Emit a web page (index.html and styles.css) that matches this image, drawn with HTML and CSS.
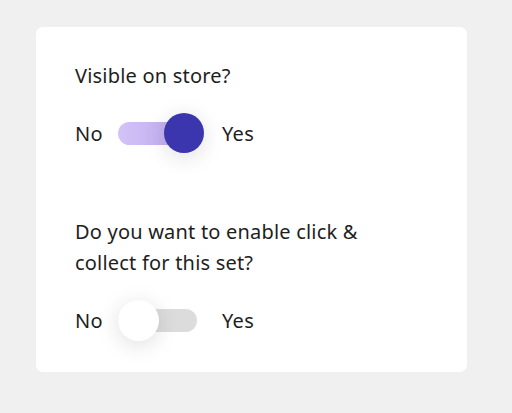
FILE: index.html
```html
<!DOCTYPE html>
<html lang="en">
<head>
    <meta charset="UTF-8">
    <meta name="viewport" content="width=device-width, initial-scale=1.0">
    <title>Store settings</title>
    <link rel="stylesheet" href="styles.css">
</head>
<body>
    <div class="card">
        <p class="question">Visible on store?</p>
        <div class="switch-row first">
            <span class="label">No</span>
            <div class="switch on">
                <div class="track"></div>
                <div class="knob"></div>
            </div>
            <span class="label">Yes</span>
        </div>

        <p class="question second">Do you want to enable click &amp;<br>collect for this set?</p>
        <div class="switch-row">
            <span class="label">No</span>
            <div class="switch">
                <div class="track"></div>
                <div class="knob"></div>
            </div>
            <span class="label">Yes</span>
        </div>
    </div>
</body>
</html>
```

FILE: styles.css
```css
body {
    margin: 0;
    padding: 27px 0 0 36px;
    background-color: #f0f0f0;
    font-family: 'Noto Sans', sans-serif;
    color: #1e1e1e;
}

.card {
    box-sizing: border-box;
    width: 431px;
    height: 345px;
    padding: 33px 39px;
    background: #fff;
    border-radius: 7px;
}

.question {
    margin: 0;
    font-size: 20px;
    line-height: 31px;
    letter-spacing: 0.2px;
}

.question.second {
    margin-top: 62px;
}

.switch-row {
    display: flex;
    align-items: center;
    margin-top: 22px;
}

.label {
    width: 28px;
    font-size: 20px;
    letter-spacing: 0.3px;
}

.switch {
    position: relative;
    width: 79px;
    height: 41px;
    margin: 0 25px 0 15px;
}

.track {
    margin-top: 9px;
    height: 23px;
    border-radius: 12px;
    background: #dcdcdc;
}

.switch.on .track {
    background: linear-gradient(90deg, #d3c3f8, #b9a4ea);
}

.knob {
    position: absolute;
    top: 0;
    left: 0;
    width: 41px;
    height: 41px;
    border-radius: 50%;
    background: #fff;
    box-shadow: 0 4px 22px rgba(0, 0, 0, 0.13);
}

.switch.on .knob {
    left: 46px;
    width: 40px;
    height: 40px;
    background: #3b35ae;
}
```
